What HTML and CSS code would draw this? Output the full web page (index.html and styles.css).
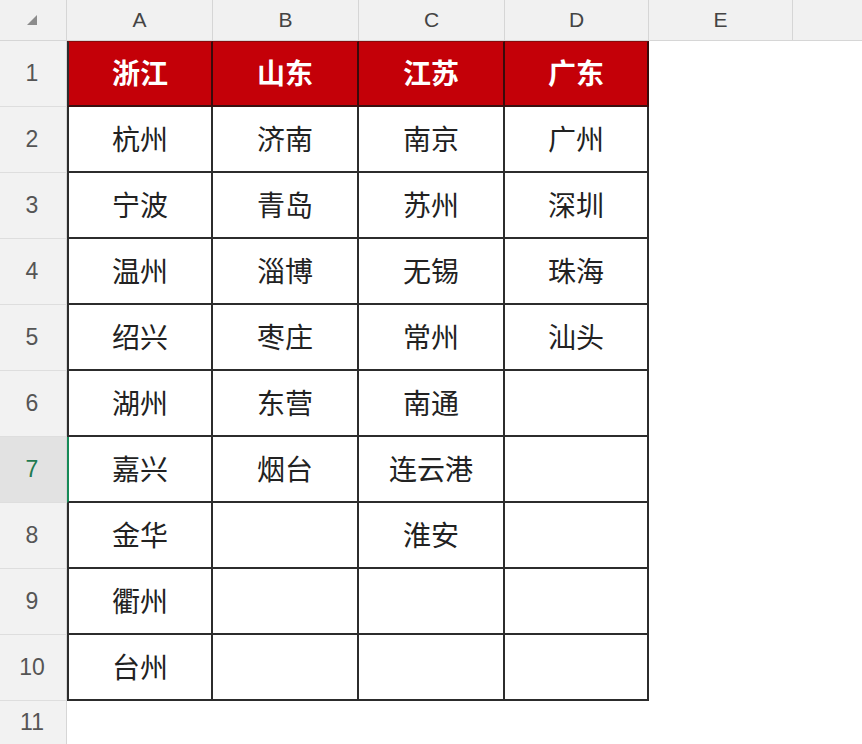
FILE: index.html
```html
<!DOCTYPE html>
<html lang="zh">
<head>
<meta charset="utf-8">
<link rel="stylesheet" href="styles.css">
</head>
<body>
<div class="sheet">
  <div class="corner"><svg width="12" height="12" viewBox="0 0 12 12"><polygon points="11,1 11,11 1,11" fill="#8c8c8c"/></svg></div>
  <div class="colh">A</div><div class="colh">B</div><div class="colh">C</div><div class="colh">D</div><div class="colh">E</div><div class="colh last"></div>

  <div class="rowh">1</div>
  <div class="cell hd first">浙江</div><div class="cell hd">山东</div><div class="cell hd">江苏</div><div class="cell hd">广东</div><div class="blank"></div><div class="blank"></div>

  <div class="rowh">2</div>
  <div class="cell first">杭州</div><div class="cell">济南</div><div class="cell">南京</div><div class="cell">广州</div><div class="blank"></div><div class="blank"></div>

  <div class="rowh">3</div>
  <div class="cell first">宁波</div><div class="cell">青岛</div><div class="cell">苏州</div><div class="cell">深圳</div><div class="blank"></div><div class="blank"></div>

  <div class="rowh">4</div>
  <div class="cell first">温州</div><div class="cell">淄博</div><div class="cell">无锡</div><div class="cell">珠海</div><div class="blank"></div><div class="blank"></div>

  <div class="rowh">5</div>
  <div class="cell first">绍兴</div><div class="cell">枣庄</div><div class="cell">常州</div><div class="cell">汕头</div><div class="blank"></div><div class="blank"></div>

  <div class="rowh">6</div>
  <div class="cell first">湖州</div><div class="cell">东营</div><div class="cell">南通</div><div class="cell"></div><div class="blank"></div><div class="blank"></div>

  <div class="rowh active">7</div>
  <div class="cell first selected">嘉兴</div><div class="cell">烟台</div><div class="cell">连云港</div><div class="cell"></div><div class="blank"></div><div class="blank"></div>

  <div class="rowh">8</div>
  <div class="cell first">金华</div><div class="cell"></div><div class="cell">淮安</div><div class="cell"></div><div class="blank"></div><div class="blank"></div>

  <div class="rowh">9</div>
  <div class="cell first">衢州</div><div class="cell"></div><div class="cell"></div><div class="cell"></div><div class="blank"></div><div class="blank"></div>

  <div class="rowh">10</div>
  <div class="cell first">台州</div><div class="cell"></div><div class="cell"></div><div class="cell"></div><div class="blank"></div><div class="blank"></div>

  <div class="rowh">11</div>
  <div class="blank"></div><div class="blank"></div><div class="blank"></div><div class="blank"></div><div class="blank"></div><div class="blank"></div>
</div>
</body>
</html>
```

FILE: styles.css
```css
* { box-sizing: border-box; }
html, body { margin: 0; padding: 0; background: #ffffff; }
body { width: 862px; height: 744px; overflow: hidden; }

.sheet {
  display: grid;
  grid-template-columns: 67px 146px 146px 146px 144px 144px 69px;
  grid-template-rows: 41px repeat(10, 66px) 44px;
  font-family: "Noto Sans CJK SC", "Noto Sans", sans-serif;
}

.corner {
  background: #f1f1f1;
  border-right: 1px solid #d6d6d6;
  border-bottom: 1px solid #d6d6d6;
  display: flex;
  align-items: flex-start;
  justify-content: flex-start;
  padding: 14px 0 0 26px;
}

.colh {
  background: #f1f1f1;
  border-right: 1px solid #d6d6d6;
  border-bottom: 1px solid #d6d6d6;
  display: flex;
  align-items: center;
  justify-content: center;
  font-family: "Liberation Sans", "Noto Sans", sans-serif;
  font-size: 21px;
  color: #444;
  padding-bottom: 1px;
}
.colh.last { border-right: none; }

.rowh {
  background: #f2f2f2;
  border-right: 1px solid #d6d6d6;
  border-bottom: 1px solid #dedede;
  display: flex;
  align-items: center;
  justify-content: center;
  font-family: "Liberation Sans", "Noto Sans", sans-serif;
  font-size: 23px;
  color: #555;
  padding: 0 2px 0 0;
}
.rowh.active {
  background: #e2e2e2;
  color: #1f7a50;
}

.cell {
  background: #ffffff;
  border-right: 2px solid #2c2c2c;
  border-bottom: 2px solid #2c2c2c;
  display: flex;
  align-items: center;
  justify-content: center;
  font-size: 28px;
  color: #222;
  padding-bottom: 3px;
}
.cell.first { border-left: 2px solid #2c2c2c; }
.cell.selected { border-left-color: #168a58; }

.cell.hd {
  background: #c40008;
  color: #ffffff;
  font-weight: 700;
  border-top: 1px solid #8a0a0a;
  border-right-color: #3a0a0a;
  border-bottom-color: #3a1010;
  padding-bottom: 4px;
}

.blank { background: #ffffff; }
```
